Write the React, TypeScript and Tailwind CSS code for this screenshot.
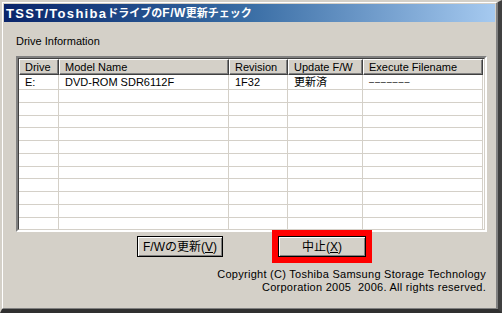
import React from 'react'

const FONT = '"Liberation Sans", "Noto Sans CJK JP", sans-serif'

const columns = [
  { label: 'Drive', width: 40 },
  { label: 'Model Name', width: 170 },
  { label: 'Revision', width: 59 },
  { label: 'Update F/W', width: 75 },
  { label: 'Execute Filename', width: 120 },
]

const firstRow = ['E:', 'DVD-ROM SDR6112F', '1F32', '更新済', '–––––––']

function Row({ cells, tall }: { cells: string[]; tall?: boolean }) {
  return (
    <div className={`flex shrink-0 ${tall ? 'h-[15px]' : 'h-[12.75px]'}`}>
      {columns.map((c, i) => (
        <div
          key={c.label}
          style={{ width: c.width }}
          className="flex items-center border-r border-b border-[#d4d0c8] pl-[6px] text-[11px] leading-none text-black whitespace-nowrap"
        >
          <span className={i === 4 ? 'text-[9px] tracking-[0.9px]' : ''}>{cells[i]}</span>
        </div>
      ))}
    </div>
  )
}

function WinButton({ children, width }: { children: React.ReactNode; width: number }) {
  return (
    <button
      style={{ width }}
      className="h-[21px] border border-black bg-[#d4d0c8] shadow-[inset_1px_1px_0_#ffffff,inset_-1px_-1px_0_#808080] text-[12px] leading-none text-black flex items-center justify-center"
    >
      {children}
    </button>
  )
}

export default function App() {
  return (
    <div
      className="w-[502px] h-[313px] bg-[#d4d0c8] overflow-hidden"
      style={{ fontFamily: FONT }}
    >
      {/* window frame */}
      <div className="w-full h-full flex flex-col border-t-2 border-l-2 border-t-[#d4d0c8] border-l-[#d4d0c8] border-r-4 border-b-4 border-r-[#404040] border-b-[#303030]">
        <div className="flex-1 flex flex-col border-t border-l border-t-white border-l-white border-r-2 border-b border-r-[#808080] border-b-[#808080] p-px">
          {/* title bar */}
          <div className="h-[18px] shrink-0 flex items-center pl-[2px] bg-gradient-to-r from-[#0a246a] via-[#3a6ea5] to-[#a6caf0]">
            <span className="text-white font-bold leading-none whitespace-nowrap flex items-center">
              <span className="text-[13px] tracking-[1.3px]">TSST/Toshiba</span>
              <span className="text-[11px]">ドライブの</span>
              <span className="text-[12px] tracking-[0.5px]">F/W</span>
              <span className="text-[11px]">更新チェック</span>
            </span>
          </div>

          {/* body */}
          <div className="flex-1 flex flex-col">
            <div className="ml-[12px] mt-[13px] text-[11px] leading-[13px] text-black">Drive Information</div>

            {/* list view */}
            <div className="ml-[12px] mt-[8px] w-[471px] h-[176px] border-2 border-t-[#808080] border-l-[#808080] border-r-white border-b-white">
              <div className="w-full h-full border border-t-[#404040] border-l-[#404040] border-r-[#d4d0c8] border-b-[#d4d0c8] bg-white flex flex-col overflow-hidden">
                <div className="flex h-[16px] shrink-0 bg-[#d4d0c8]">
                  {columns.map((c) => (
                    <div
                      key={c.label}
                      style={{ width: c.width }}
                      className="flex items-center pl-[5px] border-t border-l border-t-white border-l-white border-r border-b border-r-[#404040] border-b-[#404040] shadow-[inset_-1px_-1px_0_#808080] text-[11px] leading-none text-black whitespace-nowrap"
                    >
                      {c.label}
                    </div>
                  ))}
                  <div className="flex-1 bg-white" />
                </div>
                <Row cells={firstRow} tall />
                {Array.from({ length: 12 }).map((_, i) => (
                  <Row key={i} cells={['', '', '', '', '']} />
                ))}
              </div>
            </div>

            {/* buttons */}
            <div className="flex mt-[4px] ml-[133px] gap-[55px]">
              <WinButton width={86}>
                F/Wの更新(<span className="underline">V</span>)
              </WinButton>
              <div className="outline outline-[6px] outline-[#ff0000]">
                <WinButton width={88}>
                  中止(<span className="underline">X</span>)
                </WinButton>
              </div>
            </div>

            {/* copyright */}
            <div className="mt-[11px] pr-[9px] text-right text-[11px] leading-[13px] tracking-[0.27px] text-black">
              <div>Copyright (C) Toshiba Samsung Storage Technology</div>
              <div>Corporation 2005&nbsp;&nbsp;2006. All rights reserved.</div>
            </div>
          </div>
        </div>
      </div>
    </div>
  )
}
